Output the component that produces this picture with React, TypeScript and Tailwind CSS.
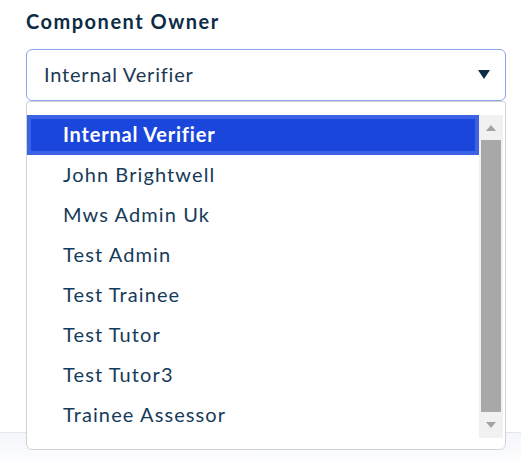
import { useState } from "react";

const owners = [
  "Internal Verifier",
  "John Brightwell",
  "Mws Admin Uk",
  "Test Admin",
  "Test Trainee",
  "Test Tutor",
  "Test Tutor3",
  "Trainee Assessor",
];

const font = { fontFamily: "Lato, 'Open Sans', sans-serif" };

const App = () => {
  const [selected] = useState("Internal Verifier");

  return (
    <div
      className="relative w-[521px] h-[462px] overflow-hidden bg-white"
      style={font}
    >
      <div className="pl-[26px] pr-[15px] pt-[9px]">
        {/* Label */}
        <h2 className="text-[20px] leading-[24px] font-bold tracking-[1.5px] text-[#0d2c44]">
          Component Owner
        </h2>

        {/* Select box */}
        <div className="mt-[16px] h-[52px] flex items-center justify-between rounded-[6px] border border-[#8ea4ef] pl-[17px] pr-[15px] pb-[3px]">
          <span className="text-[20px] tracking-[0.8px] text-[#1b3a53]">{selected}</span>
          <svg width="12" height="9" viewBox="0 0 12 9" className="mt-[1px]">
            <path d="M0 0h12L6 9z" fill="#0d2c44" />
          </svg>
        </div>
      </div>

      {/* Page content behind the open list */}
      <div className="mt-[331px] h-[40px] border-t border-[#e1e5ec] bg-gradient-to-b from-[#f4f6fa] to-white" />

      {/* Open dropdown list */}
      <div className="absolute left-[26px] top-[101px] w-[480px] h-[349px] flex flex-col rounded-b-[6px] rounded-t-[3px] border border-[#d3d3d3] bg-white pt-[13px] pr-[2px]">
        <div className="flex h-[323px]">
          <ul className="flex-1">
            {owners.map((name) => {
              const active = name === selected;
              return (
                <li
                  key={name}
                  className={
                    active
                      ? "h-[40px] flex items-center border-[4px] border-[#3c63e5] bg-[#1b46dc] pl-[32px] pb-[3px] text-[20px] font-bold tracking-[0.8px] text-white"
                      : "h-[40px] flex items-center pl-[36px] pb-[3px] text-[20px] tracking-[1.1px] text-[#163b5a]"
                  }
                >
                  {name}
                </li>
              );
            })}
          </ul>

          {/* Scrollbar */}
          <div className="w-[24px] flex flex-col bg-[#f1f1f1]">
            <div className="h-[25px] flex items-center justify-center">
              <svg width="10" height="6" viewBox="0 0 10 6">
                <path d="M5 0l5 6H0z" fill="#a3a3a3" />
              </svg>
            </div>
            <div className="flex-1 px-[2px]">
              <div className="h-full bg-[#a8a8a8]" />
            </div>
            <div className="h-[26px] flex items-center justify-center">
              <svg width="10" height="6" viewBox="0 0 10 6">
                <path d="M0 0h10L5 6z" fill="#a3a3a3" />
              </svg>
            </div>
          </div>
        </div>
      </div>
    </div>
  );
};

export default App;
